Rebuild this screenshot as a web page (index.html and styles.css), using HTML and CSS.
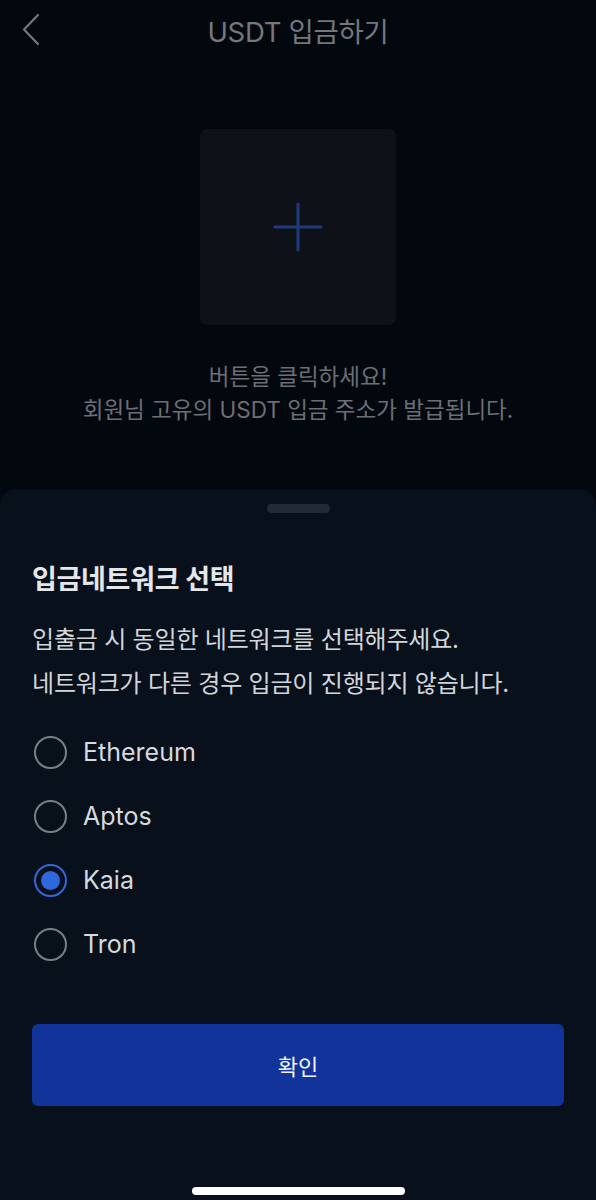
FILE: index.html
```html
<!DOCTYPE html>
<html lang="ko">
<head>
  <meta charset="UTF-8" />
  <meta name="viewport" content="width=device-width, initial-scale=1.0"/>
  <title>USDT 입금하기</title>
  <link rel="stylesheet" href="styles.css">
</head>
<body>
  <div class="screen">
    <div class="top">
      <header class="header">
        <button class="back" aria-label="뒤로">
          <svg width="20" height="34" viewBox="0 0 20 34">
            <path d="M17 2 L3 16.5 L17 31" fill="none" stroke="#75777c" stroke-width="2.2" stroke-linecap="round" stroke-linejoin="round"/>
          </svg>
        </button>
        <h1>USDT 입금하기</h1>
      </header>

      <button class="add-box" aria-label="주소 발급">
        <svg width="50" height="50" viewBox="0 0 50 50">
          <path d="M25 2 V48 M2 25 H48" stroke="#1d3a7c" stroke-width="3" stroke-linecap="round"/>
        </svg>
      </button>

      <p class="hint">버튼을 클릭하세요!<br>회원님 고유의 USDT 입금 주소가 발급됩니다.</p>
    </div>

    <div class="sheet">
      <div class="handle"></div>
      <h2>입금네트워크 선택</h2>
      <p class="desc">입출금 시 동일한 네트워크를 선택해주세요.<br>네트워크가 다른 경우 입금이 진행되지 않습니다.</p>

      <ul class="networks">
        <li class="network"><span class="radio"></span>Ethereum</li>
        <li class="network"><span class="radio"></span>Aptos</li>
        <li class="network selected"><span class="radio"></span>Kaia</li>
        <li class="network"><span class="radio"></span>Tron</li>
      </ul>

      <button class="confirm">확인</button>
      <div class="home-bar"></div>
    </div>
  </div>
</body>
</html>
```

FILE: styles.css
```css
body {
  margin: 0;
  background: #03070e;
  font-family: Inter, "Noto Sans CJK KR", sans-serif;
}

.screen {
  width: 596px;
  height: 1200px;
  display: flex;
  flex-direction: column;
  overflow: hidden;
}

.top {
  height: 489px;
  display: flex;
  flex-direction: column;
  align-items: center;
}

.header {
  position: relative;
  width: 100%;
  height: 60px;
  display: flex;
  align-items: center;
  justify-content: center;
}

.header h1 {
  margin: 0;
  font-size: 27.5px;
  font-weight: 400;
  color: #75777c;
  letter-spacing: -0.3px;
}

.back {
  position: absolute;
  left: 21px;
  top: 13px;
  padding: 0;
  background: none;
  border: none;
}

.back svg {
  display: block;
}

.add-box {
  width: 196px;
  height: 196px;
  margin-top: 69px;
  background: #0e1218;
  border: none;
  border-radius: 7px;
  display: flex;
  align-items: center;
  justify-content: center;
  padding: 0;
}

.hint {
  margin: 35px 0 0;
  text-align: center;
  font-size: 22.5px;
  line-height: 33px;
  color: #6c6f75;
}

.sheet {
  flex: 1;
  background: #08101b;
  border-radius: 16px 16px 0 0;
  padding: 15px 32px 0;
  display: flex;
  flex-direction: column;
}

.handle {
  align-self: center;
  width: 63px;
  height: 9px;
  border-radius: 5px;
  background: #232a37;
}

.sheet h2 {
  margin: 50px 0 0;
  font-size: 27px;
  line-height: 34px;
  font-weight: 700;
  color: #e4e6ea;
  letter-spacing: -0.3px;
}

.desc {
  margin: 21px 0 0;
  font-size: 24px;
  line-height: 44px;
  color: #d2d5da;
  letter-spacing: -0.2px;
}

.networks {
  list-style: none;
  margin: 14px 0 0;
  padding: 0;
}

.network {
  height: 64px;
  display: flex;
  align-items: center;
  gap: 16px;
  font-size: 25px;
  color: #d6d9de;
}

.radio {
  width: 33px;
  height: 33px;
  box-sizing: border-box;
  border: 2px solid #7b7e85;
  border-radius: 50%;
  display: flex;
  align-items: center;
  justify-content: center;
  margin-left: 2px;
}

.network.selected .radio {
  border-color: #2f68dc;
}

.network.selected .radio::after {
  content: "";
  width: 19px;
  height: 19px;
  border-radius: 50%;
  background: #2f68dc;
}

.confirm {
  margin-top: 48px;
  height: 82px;
  border: none;
  border-radius: 6px;
  background: #12349a;
  color: #f2f4f8;
  font-family: inherit;
  font-size: 22px;
}

.home-bar {
  align-self: center;
  margin-top: 81px;
  width: 213px;
  height: 8px;
  border-radius: 4px;
  background: #ffffff;
}
```
